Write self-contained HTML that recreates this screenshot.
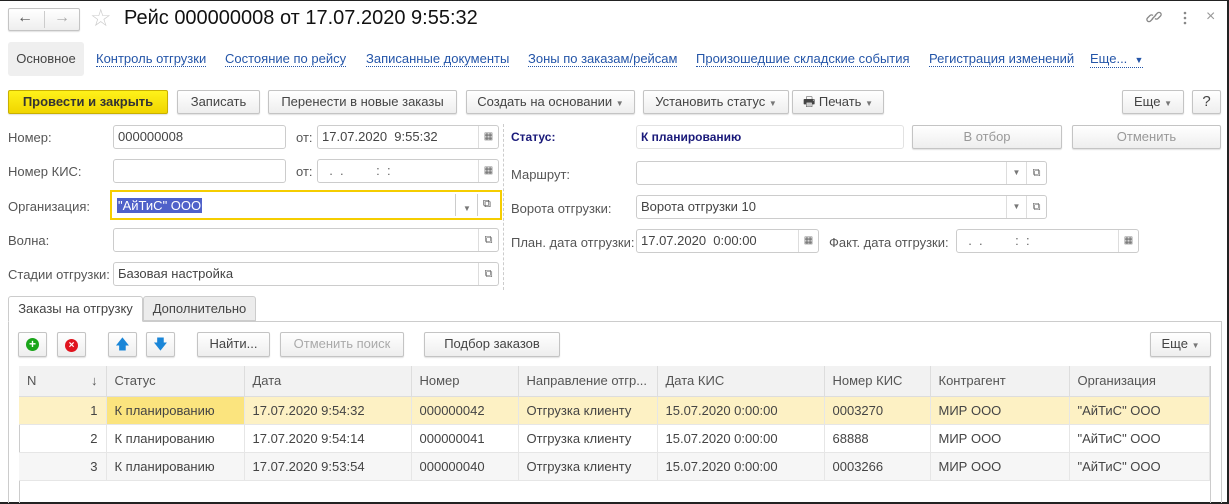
<!DOCTYPE html><html><head><meta charset="utf-8"><style>
*{box-sizing:border-box}
body{margin:0;width:1229px;height:504px;background:#fff;font-family:"Liberation Sans",Arial,sans-serif;font-size:13px;color:#444;position:relative;overflow:hidden}
.a{position:absolute;white-space:nowrap}
.btn{position:absolute;height:24px;border:1px solid #c4c4c4;border-radius:2px;background:linear-gradient(#fff,#eee);box-shadow:0 1px 1px rgba(0,0,0,.12);text-align:center;line-height:22px;color:#444}
.fld{position:absolute;height:24px;border:1px solid #ccc;border-radius:3px;background:#fff;padding-left:4px;line-height:22px;color:#444}
.lnk{position:absolute;color:#2455a8;border-bottom:1px dotted #2455a8;line-height:14px}
.ic{position:absolute;top:0;width:20px;height:22px;border-left:1px solid #ddd;text-align:center;font-size:10px;color:#666}
.lbl{position:absolute;color:#555}
.dd{font-size:8px;color:#777}
table{border-collapse:collapse;position:absolute;left:19px;top:366px;width:1191px;table-layout:fixed}
td{height:28px;padding:0 8px;border-right:1px solid #e6e6e6;border-bottom:1px solid #e6e6e6;white-space:nowrap;overflow:hidden;color:#444}
th{height:30px;background:#f2f2f2;font-weight:normal;text-align:left;padding:0 8px;border-right:1px solid #ddd;border-bottom:1px solid #ddd;color:#555}
</style></head><body>
<div class="a" style="left:0;top:0;width:1229px;height:1px;background:#222"></div>
<div class="a" style="right:0;top:0;width:2px;height:504px;background:#222"></div>
<div class="a" style="left:0;bottom:0;width:1229px;height:2px;background:#222"></div>
<div class="btn" style="left:8px;top:8px;width:72px;height:23px"></div>
<div class="a" style="left:44px;top:11px;width:1px;height:17px;background:#ccc"></div>
<div class="a" style="left:17px;top:9px;font-size:16px;color:#555">&#8592;</div>
<div class="a" style="left:54px;top:9px;font-size:16px;color:#aaa">&#8594;</div>
<div class="a" style="left:90px;top:4px;font-size:24px;color:#ccc">&#9734;</div>
<div class="a" style="left:124px;top:7px;font-size:20px;color:#111">Рейс 000000008 от 17.07.2020 9:55:32</div>
<svg class="a" style="left:1146px;top:9px" width="16" height="16" viewBox="0 0 16 16" fill="none" stroke="#888" stroke-width="1.3"><path d="M7 9.5 L4.5 12 a2.1 2.1 0 0 1 -3-3 L4 6.5 a2.1 2.1 0 0 1 3 0"/><path d="M9 6.5 L11.5 4 a2.1 2.1 0 0 1 3 3 L12 9.5 a2.1 2.1 0 0 1 -3 0"/><path d="M6 10 L10 6"/></svg>
<svg class="a" style="left:1182px;top:11px" width="6" height="14"><circle cx="3" cy="2" r="1.3" fill="#888"/><circle cx="3" cy="7" r="1.3" fill="#888"/><circle cx="3" cy="12" r="1.3" fill="#888"/></svg>
<div class="a" style="left:1206px;top:8px;font-size:16px;color:#999">&#215;</div>
<div class="a" style="left:8px;top:42px;width:76px;height:34px;background:#efefef;border-radius:3px;line-height:34px;text-align:center;color:#444">Основное</div>
<div class="lnk" style="left:96px;top:52px">Контроль отгрузки</div>
<div class="lnk" style="left:225px;top:52px">Состояние по рейсу</div>
<div class="lnk" style="left:366px;top:52px">Записанные документы</div>
<div class="lnk" style="left:528px;top:52px">Зоны по заказам/рейсам</div>
<div class="lnk" style="left:696px;top:52px">Произошедшие складские события</div>
<div class="lnk" style="left:929px;top:52px">Регистрация изменений</div>
<div class="lnk" style="left:1090px;top:52px">Еще... &nbsp;<span style="font-size:9px">&#9660;</span></div>
<div class="btn" style="left:8px;top:90px;width:160px;background:linear-gradient(#fff21a,#f0d500);border-color:#c9b000;font-weight:bold;color:#333">Провести и закрыть</div>
<div class="btn" style="left:177px;top:90px;width:83px">Записать</div>
<div class="btn" style="left:268px;top:90px;width:189px">Перенести в новые заказы</div>
<div class="btn" style="left:466px;top:90px;width:169px">Создать на основании <span class="dd">&#9660;</span></div>
<div class="btn" style="left:643px;top:90px;width:146px">Установить статус <span class="dd">&#9660;</span></div>
<div class="btn" style="left:792px;top:90px;width:92px">&#128438; Печать <span class="dd">&#9660;</span></div>
<div class="btn" style="left:1122px;top:90px;width:62px">Еще <span class="dd">&#9660;</span></div>
<div class="btn" style="left:1192px;top:90px;width:29px;font-size:15px">?</div>
<div class="lbl" style="left:8px;top:130px">Номер:</div>
<div class="fld" style="left:113px;top:125px;width:173px">000000008</div>
<div class="lbl" style="left:296px;top:130px">от:</div>
<div class="fld" style="left:317px;top:125px;width:182px">17.07.2020&nbsp; 9:55:32<div class="ic" style="right:0">&#9638;</div></div>
<div class="lbl" style="left:8px;top:164px">Номер КИС:</div>
<div class="fld" style="left:113px;top:159px;width:173px"></div>
<div class="lbl" style="left:296px;top:164px">от:</div>
<div class="fld" style="left:317px;top:159px;width:182px;color:#666">&nbsp; .&nbsp; .&nbsp;&nbsp;&nbsp;&nbsp;&nbsp;&nbsp;&nbsp;&nbsp; :&nbsp; :<div class="ic" style="right:0">&#9638;</div></div>
<div class="lbl" style="left:8px;top:199px">Организация:</div>
<div class="a" style="left:110px;top:190px;width:392px;height:30px;border:2px solid #f5cd00"></div>
<div class="a" style="left:117px;top:198px;background:#4f61c9;color:#fff;line-height:15px;padding:0 1px">"АйТиС" ООО</div>
<div class="a" style="left:455px;top:194px;width:1px;height:22px;background:#ccc"></div>
<div class="a" style="left:463px;top:199px"><span class="dd">&#9660;</span></div>
<div class="a" style="left:477px;top:194px;width:1px;height:22px;background:#ccc"></div>
<div class="a" style="left:483px;top:198px;font-size:11px;color:#444">&#10697;</div>
<div class="lbl" style="left:8px;top:233px">Волна:</div>
<div class="fld" style="left:113px;top:228px;width:386px"><div class="ic" style="right:0;font-size:11px">&#10697;</div></div>
<div class="lbl" style="left:8px;top:267px">Стадии отгрузки:</div>
<div class="fld" style="left:113px;top:262px;width:386px">Базовая настройка<div class="ic" style="right:0;font-size:11px">&#10697;</div></div>
<div class="a" style="left:503px;top:124px;height:166px;border-left:1px dashed #ccc"></div>
<div class="a" style="left:511px;top:130px;color:#1a1a7a;font-weight:bold;font-size:12px">Статус:</div>
<div class="fld" style="left:636px;top:125px;width:268px;color:#1a1a7a;font-weight:bold;font-size:12px;border-color:#e2e2e2">К планированию</div>
<div class="btn" style="left:912px;top:125px;width:150px;color:#999">В отбор</div>
<div class="btn" style="left:1072px;top:125px;width:149px;color:#999">Отменить</div>
<div class="lbl" style="left:511px;top:167px">Маршрут:</div>
<div class="fld" style="left:636px;top:161px;width:411px"><div class="ic" style="right:20px"><span class="dd">&#9660;</span></div><div class="ic" style="right:0;font-size:11px">&#10697;</div></div>
<div class="lbl" style="left:511px;top:201px">Ворота отгрузки:</div>
<div class="fld" style="left:636px;top:195px;width:411px">Ворота отгрузки 10<div class="ic" style="right:20px"><span class="dd">&#9660;</span></div><div class="ic" style="right:0;font-size:11px">&#10697;</div></div>
<div class="lbl" style="left:511px;top:235px">План. дата отгрузки:</div>
<div class="fld" style="left:636px;top:229px;width:183px">17.07.2020&nbsp; 0:00:00<div class="ic" style="right:0">&#9638;</div></div>
<div class="lbl" style="left:829px;top:235px">Факт. дата отгрузки:</div>
<div class="fld" style="left:956px;top:229px;width:183px;color:#666">&nbsp; .&nbsp; .&nbsp;&nbsp;&nbsp;&nbsp;&nbsp;&nbsp;&nbsp;&nbsp; :&nbsp; :<div class="ic" style="right:0">&#9638;</div></div>
<div class="a" style="left:8px;top:321px;width:1214px;height:182px;border:1px solid #ccc;border-bottom:none"></div>
<div class="a" style="left:8px;top:296px;width:135px;height:26px;border:1px solid #ccc;border-bottom:1px solid #fff;background:#fff;border-radius:3px 3px 0 0;line-height:24px;text-align:center;color:#444">Заказы на отгрузку</div>
<div class="a" style="left:143px;top:296px;width:113px;height:25px;border:1px solid #ccc;background:#ececec;border-radius:3px 3px 0 0;line-height:24px;text-align:center;color:#444">Дополнительно</div>
<div class="btn" style="left:18px;top:332px;width:29px;height:25px"><span style="display:inline-block;margin-top:5px;width:13px;height:13px;border-radius:50%;background:#1aa51a;color:#fff;font-size:12px;line-height:13px;font-weight:bold">+</span></div>
<div class="btn" style="left:57px;top:332px;width:29px;height:25px"><span style="display:inline-block;margin-top:5px;width:13px;height:13px;border-radius:50%;background:#e0141e;color:#fff;font-size:10px;line-height:13px;font-weight:bold">×</span></div>
<div class="btn" style="left:108px;top:332px;width:29px;height:25px;color:#1a86d8;font-size:14px">&#129093;</div>
<div class="btn" style="left:146px;top:332px;width:29px;height:25px;color:#1a86d8;font-size:14px">&#129095;</div>
<div class="btn" style="left:197px;top:332px;width:73px;height:25px">Найти...</div>
<div class="btn" style="left:280px;top:332px;width:124px;height:25px;color:#aaa">Отменить поиск</div>
<div class="btn" style="left:424px;top:332px;width:136px;height:25px">Подбор заказов</div>
<div class="btn" style="left:1150px;top:332px;width:61px;height:25px">Еще <span class="dd">&#9660;</span></div>
<div class="a" style="left:19px;top:366px;width:1192px;height:137px;border:1px solid #ccc;border-bottom:none"></div>
<table>
<colgroup><col style="width:87px"><col style="width:138px"><col style="width:167px"><col style="width:107px"><col style="width:139px"><col style="width:167px"><col style="width:106px"><col style="width:139px"><col></colgroup>
<tr><th>N<span style="float:right">&#8595;</span></th><th>Статус</th><th>Дата</th><th>Номер</th><th>Направление отгр...</th><th>Дата КИС</th><th>Номер КИС</th><th>Контрагент</th><th>Организация</th></tr>
<tr style="background:#fdf1c4"><td style="text-align:right">1</td><td style="background:#fbe47e">К планированию</td><td>17.07.2020 9:54:32</td><td>000000042</td><td>Отгрузка клиенту</td><td>15.07.2020 0:00:00</td><td>0003270</td><td>МИР ООО</td><td>"АйТиС" ООО</td></tr>
<tr><td style="text-align:right">2</td><td>К планированию</td><td>17.07.2020 9:54:14</td><td>000000041</td><td>Отгрузка клиенту</td><td>15.07.2020 0:00:00</td><td>68888</td><td>МИР ООО</td><td>"АйТиС" ООО</td></tr>
<tr style="background:#f6f6f6"><td style="text-align:right">3</td><td>К планированию</td><td>17.07.2020 9:53:54</td><td>000000040</td><td>Отгрузка клиенту</td><td>15.07.2020 0:00:00</td><td>0003266</td><td>МИР ООО</td><td>"АйТиС" ООО</td></tr>
</table>
</body></html>
